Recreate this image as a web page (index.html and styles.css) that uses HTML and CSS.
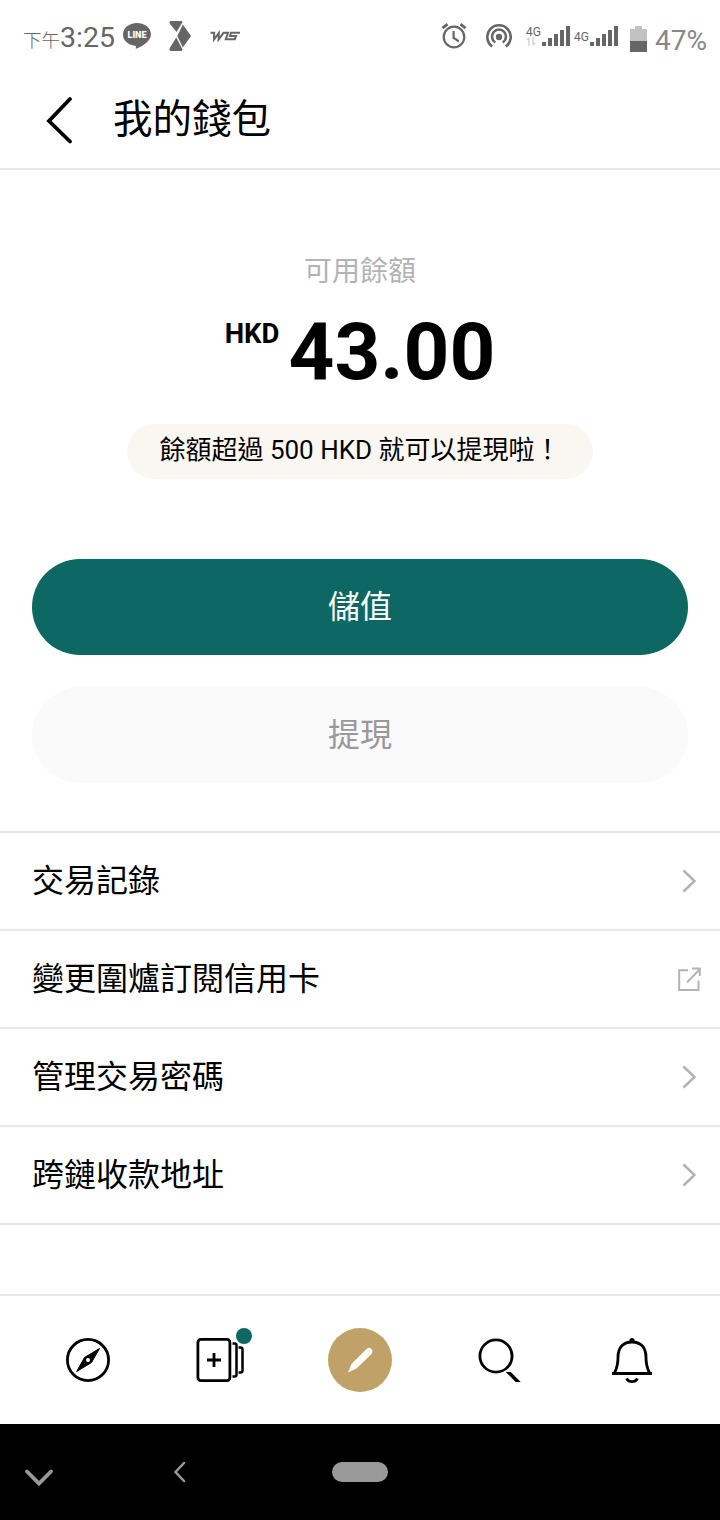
FILE: index.html
```html
<!DOCTYPE html>
<html lang="zh-Hant">
<head>
	<meta charset="UTF-8">
	<title>我的錢包</title>
	<link rel="stylesheet" href="styles.css">
</head>
<body>

	<!-- 狀態列 -->
	<div class="status">
		<div class="time"><small>下午</small>3:25</div>
		<svg class="line" width="30" height="28" viewBox="0 0 30 28">
			<path d="M15 1C7 1 1 6 1 12.500c0 6 5 10.200 12 11.300 1.200.3 1 1.200.700 3.200 5-2 15.300-7.500 15.300-14.500C29 6 23 1 15 1z" fill="#666"/>
			<text x="15" y="16" text-anchor="middle" class="line-text">LINE</text>
		</svg>
		<svg class="exo" width="24" height="32" viewBox="0 0 24 32">
			<path d="M3 1h10.500q1.500 0 .8 1.500L8.500 12 2 4Q.5 1 3 1zM14.800 4.500 23 16l-8.200 11.500L9.300 16zM8.300 17.500l6 11.500q.5 2-1 2H3Q.5 31 2 27.500z" fill="#666"/>
		</svg>
		<svg class="wts" width="30" height="12" viewBox="0 0 30 12">
			<path d="M.5 2.800h3.700L4 9.500 8.800 3 8.600 9.500 13.500 2.800H18L15.800 9.200h9L26 6h-6l1-3.200h9" fill="none" stroke="#666" stroke-width="2"/>
		</svg>
		<span class="spacer"></span>
		<svg class="alarm" width="26" height="26" viewBox="0 0 26 26">
			<g fill="none" stroke="#666" stroke-width="2.200">
				<circle cx="13" cy="14" r="10.300"/>
				<path d="M12.600 8v7l5.200 3.200"/>
				<path d="M1.500 5.200 6.500 1.200M24.500 5.200 19.500 1.200" stroke-width="2.800"/>
			</g>
		</svg>
		<svg class="hotspot" width="26" height="26" viewBox="0 0 26 26">
			<g fill="none" stroke="#666" stroke-width="2.600">
				<path d="M6.200 23.500A11.700 11.700 0 1 1 19.800 23.500"/>
				<path d="M9.300 19.500A7 7 0 1 1 16.700 19.500"/>
			</g>
			<circle cx="13" cy="14" r="3.200" fill="#666"/>
		</svg>
		<div class="net">
			<span>4G</span>
			<svg width="10" height="9" viewBox="0 0 10 9">
				<path d="M3 9V1M1 3l2-2M7 0v8M9 6 7 8" fill="none" stroke="#ccc" stroke-width="1.200"/>
			</svg>
		</div>
		<svg class="signal" width="28" height="20" viewBox="0 0 28 20">
			<path d="M0 16h4v4H0zM6 12h4v8H6zM12 8h4v12h-4zM18 4h4v16h-4zM24 0h4v20h-4z" fill="#666"/>
		</svg>
		<div class="net net2"><span>4G</span></div>
		<svg class="signal" width="28" height="20" viewBox="0 0 28 20">
			<path d="M0 16h4v4H0zM6 12h4v8H6zM12 8h4v12h-4zM18 4h4v16h-4zM24 0h4v20h-4z" fill="#666"/>
		</svg>
		<svg class="battery" width="17" height="26" viewBox="0 0 17 26">
			<path d="M5 0h7v3h5v12H0V3h5z" fill="#c2c2c2"/>
			<path d="M0 15h17v11H0z" fill="#666"/>
		</svg>
		<div class="percent">47%</div>
	</div>

	<!-- 標題 -->
	<div class="header">
		<svg width="28" height="48" viewBox="0 0 28 48">
			<path d="M25 3 4 25 25 45.500" fill="none" stroke="#000" stroke-width="3.800" stroke-linecap="round"/>
		</svg>
		<h1>我的錢包</h1>
	</div>

	<!-- 餘額 -->
	<div class="balance">
		<p class="label">可用餘額</p>
		<div class="amount"><span class="currency">HKD</span><span class="number">43.00</span></div>
		<p class="hint">餘額超過 500 HKD 就可以提現啦！</p>
	</div>

	<div class="buttons">
		<button class="btn">儲值</button>
		<button class="btn disabled" disabled>提現</button>
	</div>

	<!-- 選單 -->
	<ul class="menu">
		<li>交易記錄
			<svg width="16" height="26" viewBox="0 0 16 26"><path d="M3.500 2.500 14.500 13 3.500 23.500"/></svg>
		</li>
		<li>變更圍爐訂閱信用卡
			<svg class="external" width="26" height="26" viewBox="0 0 26 26"><path d="M12 4.200H3.200V24h19.300V14.500M11 16.500 24 3M16 2.400h7.800V10"/></svg>
		</li>
		<li>管理交易密碼
			<svg width="16" height="26" viewBox="0 0 16 26"><path d="M3.500 2.500 14.500 13 3.500 23.500"/></svg>
		</li>
		<li>跨鏈收款地址
			<svg width="16" height="26" viewBox="0 0 16 26"><path d="M3.500 2.500 14.500 13 3.500 23.500"/></svg>
		</li>
	</ul>

	<!-- 底部導覽 -->
	<div class="nav">
		<div class="item">
			<svg width="48" height="48" viewBox="0 0 48 48">
				<circle cx="24" cy="24" r="20.600" fill="none" stroke="#000" stroke-width="2.800"/>
				<path d="M35.500 12.500 27.500 26.500 12.700 35.500 20.500 21.500z" fill="#000" stroke="#000" stroke-linejoin="round"/>
				<circle cx="24" cy="24" r="2" fill="#fff"/>
			</svg>
		</div>
		<div class="item">
			<div class="follow">
				<svg width="60" height="48" viewBox="0 0 60 48">
					<g fill="none" stroke="#000" stroke-width="2.800">
						<rect x="3.900" y="3.400" width="32" height="41.200" rx="3"/>
						<path d="M13 24h14M20 17v14"/>
						<path d="M38.500 7.500h2q2 0 2 2v29q0 2-2 2h-2M44.500 11.500h2q2 0 2 2v21q0 2-2 2h-2" stroke-width="2.500"/>
					</g>
				</svg>
				<span class="dot"></span>
			</div>
		</div>
		<div class="item">
			<div class="write">
				<svg width="28" height="28" viewBox="0 0 28 28">
					<path d="M2 26.500 5.500 18 20 3.500q3-3 5.500-.5 2 2.500-.5 5.500L10.500 22.500z" fill="#fff"/>
				</svg>
			</div>
		</div>
		<div class="item">
			<svg width="50" height="48" viewBox="-1 0 50 48">
				<circle cx="24" cy="20" r="16.100" fill="none" stroke="#000" stroke-width="2.800"/>
				<path d="M33.700 36h5l10 10h-5z" fill="#000"/>
			</svg>
		</div>
		<div class="item">
			<svg width="48" height="48" viewBox="0 0 48 48">
				<circle cx="24" cy="4.500" r="2.600" fill="#000"/>
				<g fill="none" stroke="#000" stroke-width="2.800">
					<path d="M4 37.500h40M6.500 37C9.500 31 10 28 10 21.500 10 11 15.500 6 24 6s14 5 14 15.500c0 6.500.5 9.500 3.500 15.500"/>
					<path d="M18.500 42.500q2 3.200 5.500 3.200t5.500-3.200"/>
				</g>
			</svg>
		</div>
	</div>

	<!-- 系統按鍵 -->
	<div class="system">
		<svg class="down" width="30" height="20" viewBox="0 0 30 20"><path d="M3 3.500 15 15.500 27 3.500"/></svg>
		<svg class="back" width="14" height="22" viewBox="0 0 14 22"><path d="M12 2 3.500 11l8.500 9"/></svg>
		<span class="home"></span>
	</div>

</body>
</html>
```

FILE: styles.css
```css
*{
	margin: 0;
	padding: 0;
	box-sizing: border-box;
}
body{
	width: 720px;
	height: 1520px;
	background-color: #fff;
	color: #000;
	font-family: Roboto, "Noto Sans CJK TC", sans-serif;
}
svg{
	display: block;
	flex: none;
}

/*狀態列*/
.status{
	display: flex;
	align-items: flex-start;
	height: 72px;
	padding-left: 23px;
	padding-right: 13px;
	color: #666;
}
.time{
	width: 92px;
	margin-top: 21px;
	font-size: 28.500px;
	line-height: 33px;
	white-space: nowrap;
}
.time small{
	font-size: 18.500px;
	font-weight: 300;
}
.line{
	margin: 22px 0 0 7px;
}
.line-text{
	font-size: 9px;
	font-weight: 900;
	fill: #fff;
}
.exo{
	margin: 20px 0 0 16px;
}
.wts{
	margin: 30px 0 0 18px;
}
.spacer{
	flex: 1;
}
.alarm{
	margin: 23px 19px 0 0;
}
.hotspot{
	margin: 23px 14px 0 0;
}
.net{
	width: 16px;
	margin-top: 25px;
	font-size: 12px;
	line-height: 14px;
}
.net svg{
	margin-top: -2px;
}
.net2{
	margin: 30px 0 0 4px;
}
.signal{
	margin-top: 26px;
}
.battery{
	margin: 26px 0 0 12px;
}
.percent{
	width: 52px;
	margin: 24px 0 0 8px;
	font-size: 28px;
	line-height: 33px;
	color: #888;
}

/*標題*/
.header{
	display: flex;
	align-items: center;
	height: 98px;
	padding-left: 45px;
	border-bottom: 2px solid #e8e8e8;
}
.header h1{
	margin: 0 0 0 40px;
	font-size: 39.500px;
	font-weight: 400;
	line-height: 56px;
}

/*餘額*/
.balance{
	display: flex;
	flex-direction: column;
	align-items: center;
	height: 389px;
	padding-top: 82px;
}
.label{
	font-size: 28px;
	line-height: 40px;
	color: #b3b3b3;
}
.amount{
	display: flex;
	gap: 9px;
	height: 92px;
	margin-top: 13px;
	font-weight: 700;
}
.currency{
	margin-top: 13px;
	font-size: 27.500px;
	line-height: 32px;
}
.number{
	font-size: 80px;
	line-height: 94px;
}
.hint{
	height: 55px;
	margin-top: 27px;
	padding: 0 32px;
	border-radius: 28px;
	background-color: #faf7f2;
	font-size: 26px;
	line-height: 52px;
	white-space: nowrap;
}

/*按鈕*/
.buttons{
	display: flex;
	flex-direction: column;
	gap: 32px;
	height: 272px;
	padding: 0 32px;
}
.btn{
	height: 96px;
	padding-bottom: 6px;
	border: none;
	border-radius: 48px;
	background-color: #0d6763;
	color: #fff;
	font-family: inherit;
	font-size: 32px;
}
.disabled{
	background-color: #fafafa;
	color: #999;
}

/*選單*/
.menu{
	list-style: none;
	border-top: 2px solid #e8e8e8;
}
.menu li{
	display: flex;
	align-items: center;
	justify-content: space-between;
	height: 98px;
	padding: 0 24px 0 32px;
	border-bottom: 2px solid #e8e8e8;
	font-size: 32px;
	line-height: 96px;
}
.menu svg{
	fill: none;
	stroke: #b3b3b3;
	stroke-width: 2.500;
}
.menu .external{
	margin-right: -6px;
	stroke-width: 2;
}

/*底部導覽*/
.nav{
	display: flex;
	align-items: center;
	height: 130px;
	margin-top: 69px;
	padding: 0 20px;
	border-top: 2px solid #e8e8e8;
}
.item{
	display: flex;
	flex: 1;
	justify-content: center;
}
.follow{
	position: relative;
}
.dot{
	position: absolute;
	top: -8px;
	right: 2px;
	width: 16px;
	height: 16px;
	border-radius: 50%;
	background-color: #0d6763;
}
.write{
	display: flex;
	align-items: center;
	justify-content: center;
	width: 64px;
	height: 64px;
	border-radius: 50%;
	background-color: #c0a268;
}

/*系統按鍵*/
.system{
	display: flex;
	align-items: center;
	height: 96px;
	padding-left: 24px;
	background-color: #000;
}
.system svg{
	fill: none;
	stroke: #999;
	stroke-linecap: round;
}
.down{
	margin-top: 11px;
	stroke-width: 3.800;
}
.back{
	margin-left: 118px;
	stroke-width: 2.500;
}
.home{
	width: 56px;
	height: 20px;
	margin-left: 146px;
	border-radius: 10px;
	background-color: #999;
}
```
